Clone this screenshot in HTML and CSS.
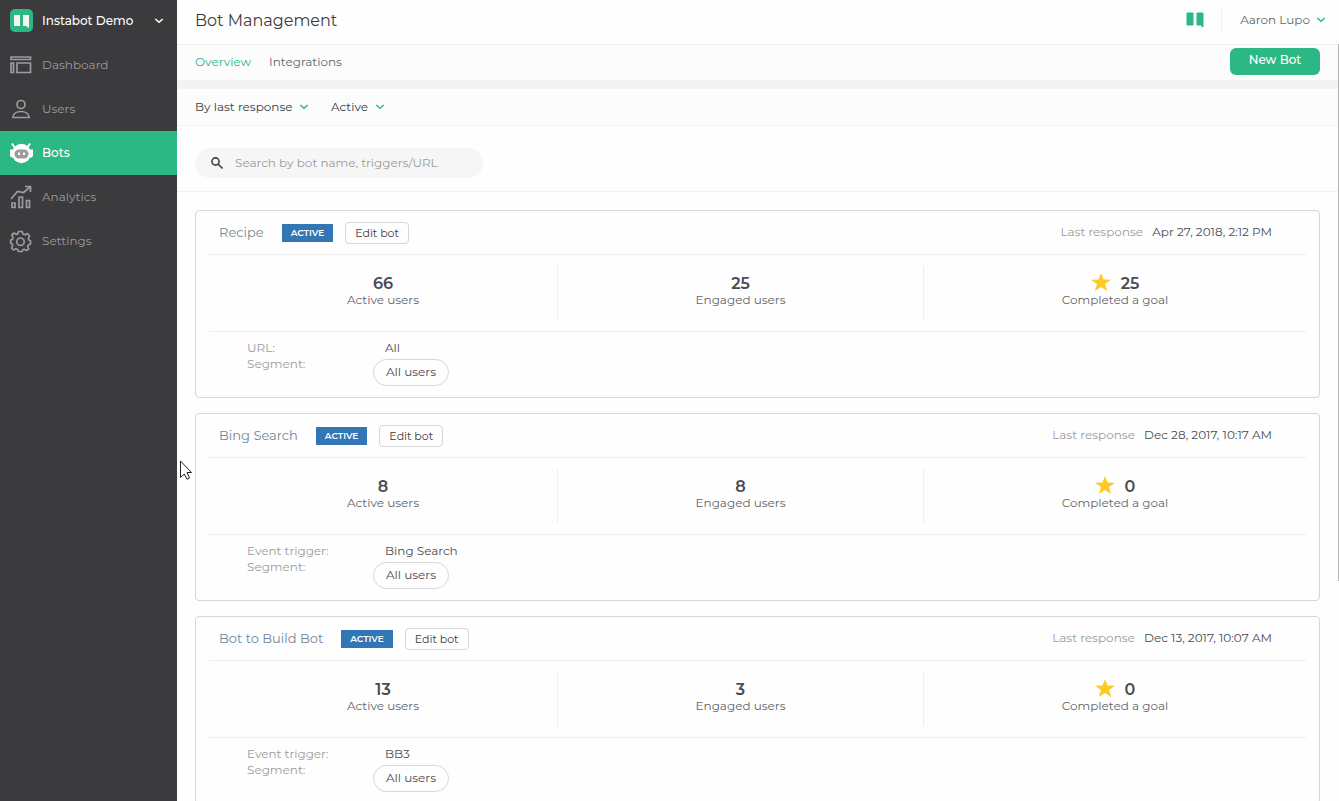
FILE: index.html
```html
<!DOCTYPE html>
<html lang="en">
<head>
    <meta charset="UTF-8">
    <meta name="viewport" content="width=device-width, initial-scale=1.0">
    <title>Bot Management</title>
    <link rel="stylesheet" href="styles.css">
</head>
<body>
    <!-- Shared icons -->
    <svg class="sprite" aria-hidden="true">
        <symbol id="chevron" viewBox="0 0 10 6">
            <path d="M1.3 1L5 4.300L8.700 1" fill="none" stroke="currentColor" stroke-width="1.600"/>
        </symbol>
        <symbol id="star" viewBox="0 0 20 18">
            <path d="M10 0L12.500 6.500L20 6.700L14 11L16.200 18L10 14L3.800 18L6 11L0 6.700L7.500 6.500Z" fill="#ffca28"/>
        </symbol>
        <symbol id="book" viewBox="0 0 18 16">
            <path d="M1 1H7V13H1ZM11 1H17V15L14.500 13H11Z" fill="currentColor" stroke="currentColor" stroke-linejoin="round"/>
        </symbol>
    </svg>

    <aside class="sidebar">
        <button class="account" type="button">
            <svg class="logo" viewBox="0 0 23 23">
                <rect width="23" height="23" rx="5" fill="#2cb885"/>
                <path d="M4 6H10V17H4ZM13 6H19V19L16 17H13Z" fill="#f4f4f4"/>
            </svg>
            <span>Instabot Demo</span>
            <svg class="chevron"><use href="#chevron"/></svg>
        </button>
        <nav>
            <a href="#">
                <svg viewBox="0 0 24 24" fill="none" stroke="currentColor" stroke-width="1.700">
                    <path d="M2 4H21.500V6.500H2ZM2 10H4.500V19.500H2ZM8 10H21.500V19.500H8Z"/>
                </svg>
                <span>Dashboard</span>
            </a>
            <a href="#">
                <svg viewBox="0 0 24 24" fill="none" stroke="currentColor" stroke-width="1.700">
                    <circle cx="12" cy="7.500" r="4"/>
                    <path d="M3.800 20.500C4.500 12.500 19.500 12.500 20.200 20.500Z"/>
                </svg>
                <span>Users</span>
            </a>
            <a href="#" class="selected">
                <svg viewBox="0 0 24 24">
                    <path d="M3 2.500L6 7M21 2.500L18 7" stroke="#fff" stroke-width="2"/>
                    <ellipse cx="12.500" cy="12.500" rx="9.500" ry="9.700" fill="#fff"/>
                    <path d="M1 8.500H4V16.500H2.500L1 15ZM24 8.500H21V16.500H22.500L24 15Z" fill="#fff"/>
                    <rect x="5.500" y="8.500" width="14" height="9" rx="4.500" fill="#9f9a9e"/>
                    <path d="M10 11.500V14M15 11.500V14" stroke="#fff" stroke-width="2"/>
                </svg>
                <span>Bots</span>
            </a>
            <a href="#">
                <svg viewBox="0 0 24 24" fill="none" stroke="currentColor" stroke-width="1.700">
                    <path d="M3 18H6V22.500H3ZM10 12H13.500V22.500H10ZM17.500 15.500H20.500V22.500H17.500Z"/>
                    <path d="M2 14L8.500 6.500L14.500 7.500L21 2M16 1.500H21.500V7"/>
                </svg>
                <span>Analytics</span>
            </a>
            <a href="#">
                <svg viewBox="0 0 24 24" fill="none" stroke="currentColor" stroke-width="1.700" stroke-linejoin="round">
                    <path d="M9.500 2.500H13.200L14 5L16 5.800L18.500 4.500L20.500 7L19.300 9.500L20 11L21.500 12V15L19.300 16L18.700 17.500L19.700 20L17.500 21.500L15 20.300L13.800 20.800L13.200 22.500H9.500L8.700 20.500L7 19.800L4.500 21L2.500 19L3.700 16.500L3.200 15L1.700 14.300V11L3.500 10.200L4 8.500L2.800 6L5 4L7.500 5.500L8.700 5Z"/>
                    <circle cx="11.500" cy="12.700" r="3.700"/>
                </svg>
                <span>Settings</span>
            </a>
        </nav>
    </aside>

    <div class="page">
        <header class="topbar">
            <h1>Bot Management</h1>
            <svg class="brand"><use href="#book"/></svg>
            <button class="user" type="button">
                Aaron Lupo
                <svg class="chevron"><use href="#chevron"/></svg>
            </button>
        </header>

        <main>
            <div class="tabs">
                <a href="#" class="current">Overview</a>
                <a href="#">Integrations</a>
                <button class="new-bot" type="button">New Bot</button>
            </div>

            <div class="filters">
                <div class="filter">
                    <select aria-label="Sort bots">
                        <option>By last response</option>
                    </select>
                    <svg class="chevron"><use href="#chevron"/></svg>
                </div>
                <div class="filter">
                    <select aria-label="Bot status">
                        <option>Active</option>
                    </select>
                    <svg class="chevron"><use href="#chevron"/></svg>
                </div>
            </div>

            <div class="search">
                <label class="search-box">
                    <svg viewBox="0 0 12 12" fill="none" stroke="#444248" stroke-width="1.600">
                        <circle cx="4.500" cy="4.500" r="3.600"/>
                        <path d="M7.200 7.200L11.500 11.500"/>
                    </svg>
                    <input type="text" aria-label="Search bots" placeholder="Search by bot name, triggers/URL">
                </label>
            </div>

            <div class="bots">
                <section class="bot">
                    <div class="bot-head">
                        <h2>Recipe</h2>
                        <span class="badge">ACTIVE</span>
                        <button class="edit" type="button">Edit bot</button>
                        <p class="last">Last response <time>Apr 27, 2018, 2:12 PM</time></p>
                    </div>
                    <div class="stats">
                        <div class="stat"><strong>66</strong>Active users</div>
                        <div class="stat"><strong>25</strong>Engaged users</div>
                        <div class="stat"><strong><svg class="star"><use href="#star"/></svg>25</strong>Completed a goal</div>
                    </div>
                    <dl class="triggers">
                        <dt>URL:</dt>
                        <dd>All</dd>
                        <dt>Segment:</dt>
                        <dd class="segment">All users</dd>
                    </dl>
                </section>

                <section class="bot">
                    <div class="bot-head">
                        <h2>Bing Search</h2>
                        <span class="badge">ACTIVE</span>
                        <button class="edit" type="button">Edit bot</button>
                        <p class="last">Last response <time>Dec 28, 2017, 10:17 AM</time></p>
                    </div>
                    <div class="stats">
                        <div class="stat"><strong>8</strong>Active users</div>
                        <div class="stat"><strong>8</strong>Engaged users</div>
                        <div class="stat"><strong><svg class="star"><use href="#star"/></svg>0</strong>Completed a goal</div>
                    </div>
                    <dl class="triggers">
                        <dt>Event trigger:</dt>
                        <dd>Bing Search</dd>
                        <dt>Segment:</dt>
                        <dd class="segment">All users</dd>
                    </dl>
                </section>

                <section class="bot">
                    <div class="bot-head">
                        <h2>Bot to Build Bot</h2>
                        <span class="badge">ACTIVE</span>
                        <button class="edit" type="button">Edit bot</button>
                        <p class="last">Last response <time>Dec 13, 2017, 10:07 AM</time></p>
                    </div>
                    <div class="stats">
                        <div class="stat"><strong>13</strong>Active users</div>
                        <div class="stat"><strong>3</strong>Engaged users</div>
                        <div class="stat"><strong><svg class="star"><use href="#star"/></svg>0</strong>Completed a goal</div>
                    </div>
                    <dl class="triggers">
                        <dt>Event trigger:</dt>
                        <dd>BB3</dd>
                        <dt>Segment:</dt>
                        <dd class="segment">All users</dd>
                    </dl>
                </section>
            </div>
        </main>
        <div class="scroll-thumb"></div>
    </div>

    <svg class="pointer" viewBox="0 0 12 20" aria-hidden="true">
        <path d="M.5 1V17.500L4.300 14L7 19.300L9.500 18L7 12.500H11.500Z" fill="#fff" stroke="#222"/>
    </svg>
</body>
</html>
```
FILE: styles.css
```css
* {
    box-sizing: border-box;
}

body {
    display: flex;
    height: 100vh;
    margin: 0;
    overflow: hidden;
    font-family: Montserrat, Inter, sans-serif;
    font-size: 12px;
    line-height: 16px;
    color: #4a4c52;
    background-color: #fefefe;
}

h1, h2, p, dl, dd {
    margin: 0;
    font-weight: 400;
}

a {
    color: inherit;
    text-decoration: none;
}

button, select, input {
    font: inherit;
    color: inherit;
    background: none;
    border: none;
    padding: 0;
}

button {
    cursor: pointer;
}

.sprite {
    position: absolute;
    width: 0;
    height: 0;
}

.chevron {
    width: 10px;
    height: 6px;
    color: #3db39e;
}

/* Sidebar */
.sidebar {
    flex: 0 0 177px;
    background-color: #3b3a3c;
    color: #9f9a9e;
}

.account {
    display: flex;
    align-items: center;
    gap: 9px;
    width: 100%;
    height: 43px;
    padding: 0 13px 2px 10px;
    color: #fff;
    font-weight: 500;
}

.account .logo {
    width: 23px;
    height: 23px;
}

.account .chevron {
    margin-left: auto;
    color: #fff;
}

.sidebar a {
    display: flex;
    align-items: center;
    gap: 9px;
    height: 44px;
    padding-left: 9px;
}

.sidebar a svg {
    width: 24px;
    height: 24px;
}

.sidebar a span {
    padding-bottom: 1px;
}

.sidebar a.selected {
    color: #fff;
    font-weight: 500;
    background-color: #2cb885;
}

/* Page */
.page {
    position: relative;
    flex: 1;
    display: flex;
    flex-direction: column;
    min-width: 0;
}

.topbar {
    display: flex;
    align-items: center;
    height: 45px;
    padding: 0 13px 4px 18px;
    border-bottom: 1px solid #f0f0f0;
}

.topbar h1 {
    padding-top: 2px;
    font-size: 16px;
    line-height: 20px;
    color: #3b3a3c;
}

.brand {
    width: 18px;
    height: 16px;
    margin-left: auto;
    margin-right: 17px;
    color: #2cb885;
}

.user {
    display: flex;
    align-items: center;
    gap: 6px;
    height: 26px;
    padding-left: 18px;
    border-left: 1px solid #f0f0f0;
    color: #62656b;
}

main {
    flex: 1;
    overflow-y: auto;
    scrollbar-width: none;
}

.scroll-thumb {
    position: absolute;
    top: 44px;
    right: 0;
    width: 1px;
    height: 67%;
    background-color: #b4b4b4;
}

.tabs {
    display: flex;
    align-items: center;
    gap: 18px;
    height: 44px;
    padding: 0 19px 2px 18px;
    background-color: #fcfcfc;
    border-bottom: 9px solid #f3f3f3;
}

.tabs a {
    color: #62656b;
}

.tabs .current {
    color: #2cb885;
}

.new-bot {
    width: 90px;
    height: 27px;
    margin-left: auto;
    padding-bottom: 3px;
    border-radius: 6px;
    background-color: #2cb885;
    color: #fff;
    font-weight: 500;
}

.filters {
    display: flex;
    align-items: center;
    gap: 22px;
    height: 37px;
    padding: 0 18px 1px;
    background-color: #fcfcfc;
    border-bottom: 1px solid #f0f0f0;
    color: #3b3a3c;
}

.filter {
    display: flex;
    align-items: center;
    position: relative;
}

.filter select {
    appearance: none;
    padding-right: 16px;
}

.filter .chevron {
    position: absolute;
    right: 0;
    pointer-events: none;
}

.search {
    padding: 22px 18px 13px;
    border-bottom: 1px solid #f0f0f0;
}

.search-box {
    display: flex;
    align-items: center;
    gap: 12px;
    width: 288px;
    height: 30px;
    padding: 0 16px;
    border-radius: 15px;
    background-color: #f6f6f6;
}

.search-box svg {
    flex: none;
    width: 12px;
    height: 12px;
}

.search-box input {
    flex: 1;
    min-width: 0;
    padding-bottom: 1px;
    outline: none;
}

.search-box input::placeholder {
    color: #9b9b9b;
}

/* Bot cards */
.bots {
    display: flex;
    flex-direction: column;
    gap: 15px;
    padding: 18px 19px 18px 18px;
}

.bot {
    padding: 0 13px 11px;
    border: 1px solid #d6d6d8;
    border-radius: 4px;
}

.bot-head {
    display: flex;
    align-items: center;
    height: 44px;
    padding: 0 34px 0 10px;
    border-bottom: 1px solid #eee;
}

.bot-head h2 {
    margin-right: 18px;
    padding-bottom: 1px;
    font-size: 13px;
    color: #71889a;
}

.badge {
    margin-right: 12px;
    padding: 0 9px;
    background-color: #3276b5;
    color: #fff;
    font-size: 9px;
    font-weight: 600;
    line-height: 18px;
}

.edit {
    height: 22px;
    padding: 0 9px;
    border: 1px solid #d6d6d8;
    border-radius: 4px;
    color: #3b3a3c;
    font-size: 11px;
}

.last {
    margin-left: auto;
    padding-bottom: 2px;
    color: #9b9b9b;
}

.last time {
    margin-left: 6px;
    color: #4a4c52;
}

.stats {
    display: grid;
    grid-template-columns: 348fr 366fr 383fr;
    padding: 11px 0;
    border-bottom: 1px solid #eee;
}

.stat {
    height: 54px;
    padding-top: 9px;
    text-align: center;
    color: #62656b;
}

.stat + .stat {
    border-left: 1px solid #eee;
}

.stat strong {
    display: flex;
    align-items: center;
    justify-content: center;
    gap: 10px;
    height: 17px;
    color: #4a4c52;
    font-size: 16px;
    font-weight: 600;
}

.star {
    width: 20px;
    height: 18px;
    margin-bottom: 3px;
}

.triggers {
    display: grid;
    grid-template-columns: 126px max-content;
    padding: 8px 0 0 38px;
}

.triggers dt {
    color: #9b9b9b;
}

.triggers dd {
    padding-left: 12px;
}

.triggers .segment {
    height: 27px;
    margin-top: 3px;
    padding: 4px 12px;
    border: 1px solid #d6d6d8;
    border-radius: 14px;
    justify-self: start;
}

.pointer {
    position: absolute;
    left: 180px;
    top: 460px;
    width: 12px;
    height: 20px;
}
```
